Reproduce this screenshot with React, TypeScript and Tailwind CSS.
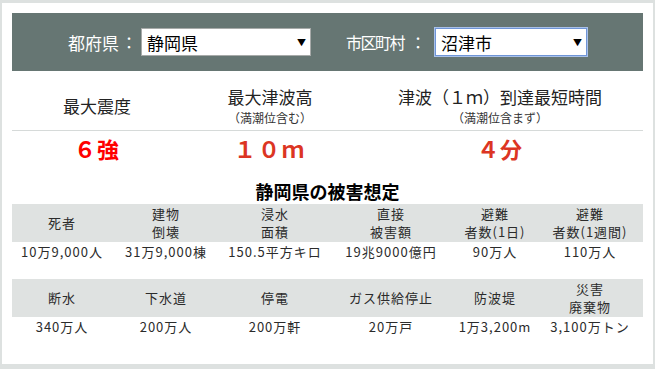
import React from "react";

const F = { fontFamily: '"Noto Sans CJK JP", "Noto Sans", sans-serif' };

function Select({ value, w, focused }: { value: string; w: string; focused?: boolean }) {
  return (
    <div
      className={`flex items-center justify-between h-[28px] bg-white pl-[5px] pr-[4px] ${w} ${
        focused ? "border border-[#6f95d6] shadow-[0_0_0_1px_#a9c1ea]" : "border border-[#a7aaa9]"
      }`}
    >
      <span className="text-[17px] leading-none text-black">{value}</span>
      <span className="text-[9px] leading-none text-black">▼</span>
    </div>
  );
}

function Table({ heads, vals }: { heads: string[][]; vals: string[] }) {
  const widths = ["w-[100px]", "w-[108px]", "w-[110px]", "w-[122px]", "w-[86px]", "w-[104px]"];
  return (
    <div className="text-[13px] text-[#2b2b2b] tracking-[1px]">
      <div className="flex bg-[#dfe2e1] h-[38px]">
        {heads.map((h, i) => (
          <div key={i} className={`${widths[i]} flex flex-col items-center justify-center leading-[18px]`}>
            {h.map((l, j) => (
              <span key={j}>{l}</span>
            ))}
          </div>
        ))}
      </div>
      <div className="flex h-[20px]">
        {vals.map((v, i) => (
          <div key={i} className={`${widths[i]} flex items-center justify-center leading-[20px] whitespace-nowrap`}>
            {v}
          </div>
        ))}
      </div>
    </div>
  );
}

export default function App() {
  return (
    <div style={F} className="w-[655px] h-[369px] bg-[#dde1e0] pt-[3px] pl-[2px] pr-[2px] pb-[5px]">
      <div className="w-full h-full bg-white p-[10px]">
        {/* header bar */}
        <div className="h-[58px] bg-[#667673] flex items-center pl-[56px] text-white">
          <span className="text-[17px] leading-none">都府県</span>
          <span className="text-[16px] leading-none ml-[2px]">：</span>
          <div className="ml-[4px]">
            <Select value="静岡県" w="w-[170px]" />
          </div>
          <span className="text-[16px] tracking-[-1.5px] leading-none ml-[35px]">市区町村</span>
          <span className="text-[16px] leading-none ml-[6px]">：</span>
          <div className="ml-[9px]">
            <Select value="沼津市" w="w-[152px]" focused />
          </div>
        </div>

        {/* headline */}
        <div className="flex items-center pt-[14px] pb-[3px] text-[#222] text-[17px]">
          <div className="w-[170px] text-center leading-[24px]">最大震度</div>
          <div className="w-[176px] flex flex-col items-center">
            <span className="leading-[24px]">最大津波高</span>
            <span className="text-[12px] leading-[18px] text-[#333]">（満潮位含む）</span>
          </div>
          <div className="w-[284px] flex flex-col items-center">
            <span className="leading-[24px]">津波（１ｍ）到達最短時間</span>
            <span className="text-[12px] leading-[18px] text-[#333]">（満潮位含まず）</span>
          </div>
        </div>
        <div className="h-px bg-[#d6dad9]" />
        <div className="flex pt-[3px] text-[22px] font-bold leading-[28px]">
          <div className="w-[170px] text-center text-[#ff0000] tracking-[1px]">６強</div>
          <div className="w-[176px] text-center text-[#dc3523] tracking-[2px]">１０ｍ</div>
          <div className="w-[284px] text-center text-[#dc3523] tracking-[1px]">４分</div>
        </div>

        <div className="text-center font-bold text-[18px] leading-[22px] text-black mt-[18px] mb-[2px]">
          静岡県の被害想定
        </div>

        <Table
          heads={[["死者"], ["建物", "倒壊"], ["浸水", "面積"], ["直接", "被害額"], ["避難", "者数(1日)"], ["避難", "者数(1週間)"]]}
          vals={["10万9,000人", "31万9,000棟", "150.5平方キロ", "19兆9000億円", "90万人", "110万人"]}
        />
        <div className="h-[17px]" />
        <Table
          heads={[["断水"], ["下水道"], ["停電"], ["ガス供給停止"], ["防波堤"], ["災害", "廃棄物"]]}
          vals={["340万人", "200万人", "200万軒", "20万戸", "1万3,200m", "3,100万トン"]}
        />
      </div>
    </div>
  );
}
